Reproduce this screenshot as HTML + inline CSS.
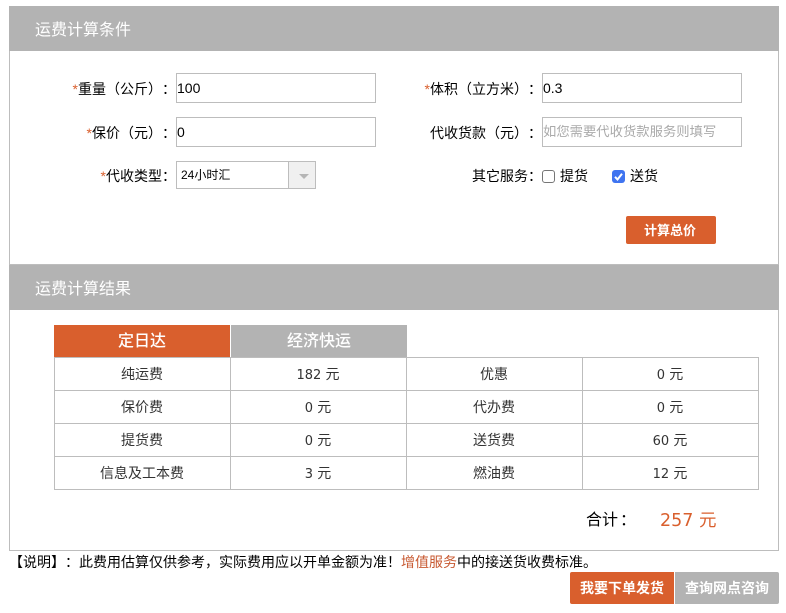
<!DOCTYPE html>
<html lang="zh">
<head>
<meta charset="utf-8">
<style>
html,body{margin:0;padding:0;background:#fff;}
body{width:786px;height:613px;position:relative;overflow:hidden;font-family:"Liberation Sans","Noto Sans CJK SC",sans-serif;font-size:14px;color:#000;text-spacing-trim:space-all;}
.a{position:absolute;white-space:nowrap;}
.hd{position:absolute;left:9px;width:770px;background:#b3b3b3;color:#fff;font-size:16px;}
.hd span{position:absolute;left:26px;}
.lb{position:absolute;text-align:right;white-space:nowrap;line-height:20px;height:20px;}
.lb i{font-style:normal;color:#d95f2d;}
.in{position:absolute;box-sizing:border-box;width:200px;height:30px;border:1px solid #bdbdbd;background:#fff;line-height:28px;padding-left:0;white-space:nowrap;overflow:hidden;}
.v{position:absolute;box-sizing:border-box;height:33px;line-height:32px;text-align:center;color:#333;width:176px;}
.v b{font-weight:normal;font-family:"DejaVu Sans",sans-serif;font-size:13px;}
.l{position:absolute;background:#bdbdbd;}
.btn{position:absolute;color:#fff;text-align:center;font-weight:bold;}
</style>
</head>
<body>
<div class="a" style="left:9px;top:6px;width:770px;height:545px;box-sizing:border-box;border:1px solid #bdbdbd;"></div>

<div class="hd" style="top:6px;height:45px;line-height:50px;"><span>运费计算条件</span></div>

<div class="lb" style="left:26px;width:150px;top:79px;"><i>*</i>重量（公斤）：</div>
<div class="in" style="left:176px;top:73px;">100</div>
<div class="lb" style="left:392px;width:150px;top:79px;"><i>*</i>体积（立方米）：</div>
<div class="in" style="left:542px;top:73px;">0.3</div>

<div class="lb" style="left:26px;width:150px;top:123px;"><i>*</i>保价（元）：</div>
<div class="in" style="left:176px;top:117px;">0</div>
<div class="lb" style="left:392px;width:150px;top:123px;">代收货款（元）：</div>
<div class="in" style="left:542px;top:117px;color:#aaa;font-size:13.330px;">如您需要代收货款服务则填写</div>

<div class="lb" style="left:26px;width:150px;top:166px;"><i>*</i>代收类型：</div>
<div class="a" style="left:176px;top:161px;width:140px;height:28px;box-sizing:border-box;border:1px solid #bdbdbd;font-size:12px;line-height:27px;padding-left:4px;">24小时汇
  <div style="position:absolute;left:111px;top:0;width:26px;height:26px;background:#f0f0f0;border-left:1px solid #bdbdbd;"></div>
  <svg style="position:absolute;left:122px;top:12px;" width="10" height="5"><path d="M0 0H10L5 5Z" fill="#b5b5b5"/></svg>
</div>

<div class="lb" style="left:392px;width:150px;top:166px;">其它服务：</div>
<div class="a" style="left:542px;top:170px;width:13px;height:13px;box-sizing:border-box;border:1px solid #767676;border-radius:3px;background:#fff;"></div>
<div class="a" style="left:560px;top:166px;line-height:20px;">提货</div>
<div class="a" style="left:612px;top:170px;width:13px;height:13px;border-radius:3px;background:#3f74f0;"></div>
<svg class="a" style="left:612px;top:170px;" width="13" height="13"><path d="M3 6.800L5.500 9.500L10 3.800" fill="none" stroke="#fff" stroke-width="2"/></svg>
<div class="a" style="left:630px;top:166px;line-height:20px;">送货</div>

<div class="btn" style="left:625px;top:216px;width:90px;height:28px;line-height:29px;font-size:13px;"></div>
<div class="a" style="left:626px;top:216px;width:90px;height:28px;background:#d95f2d;border-radius:2px;"></div>
<div class="btn" style="left:625px;top:216px;width:90px;height:28px;line-height:29px;font-size:13px;">计算总价</div>

<div class="a" style="left:9px;top:264px;width:770px;height:2px;background:#bdbdbd;"></div>
<div class="hd" style="top:265px;height:45px;line-height:48px;"><span style="top:1px;">运费计算结果</span></div>

<div class="a" style="left:54px;top:325px;width:176px;height:32px;line-height:33px;background:#d95f2d;color:#fff;text-align:center;font-size:16px;font-weight:500;">定日达</div>
<div class="a" style="left:231px;top:325px;width:176px;height:32px;line-height:33px;background:#b3b3b3;color:#fff;text-align:center;font-size:16px;font-weight:500;">经济快运</div>

<div class="l" style="left:54px;top:357px;width:705px;height:1px;"></div>
<div class="l" style="left:54px;top:390px;width:705px;height:1px;"></div>
<div class="l" style="left:54px;top:423px;width:705px;height:1px;"></div>
<div class="l" style="left:54px;top:456px;width:705px;height:1px;"></div>
<div class="l" style="left:54px;top:489px;width:705px;height:1px;"></div>
<div class="l" style="left:54px;top:357px;width:1px;height:133px;"></div>
<div class="l" style="left:230px;top:357px;width:1px;height:133px;"></div>
<div class="l" style="left:406px;top:357px;width:1px;height:133px;"></div>
<div class="l" style="left:582px;top:357px;width:1px;height:133px;"></div>
<div class="l" style="left:758px;top:357px;width:1px;height:133px;"></div>

<div class="v" style="left:54px;top:358px;">纯运费</div>
<div class="v" style="left:230px;top:358px;"><b>182 </b>元</div>
<div class="v" style="left:406px;top:358px;">优惠</div>
<div class="v" style="left:582px;top:358px;"><b>0 </b>元</div>
<div class="v" style="left:54px;top:391px;">保价费</div>
<div class="v" style="left:230px;top:391px;"><b>0 </b>元</div>
<div class="v" style="left:406px;top:391px;">代办费</div>
<div class="v" style="left:582px;top:391px;"><b>0 </b>元</div>
<div class="v" style="left:54px;top:424px;">提货费</div>
<div class="v" style="left:230px;top:424px;"><b>0 </b>元</div>
<div class="v" style="left:406px;top:424px;">送货费</div>
<div class="v" style="left:582px;top:424px;"><b>60 </b>元</div>
<div class="v" style="left:54px;top:457px;">信息及工本费</div>
<div class="v" style="left:230px;top:457px;"><b>3 </b>元</div>
<div class="v" style="left:406px;top:457px;">燃油费</div>
<div class="v" style="left:582px;top:457px;"><b>12 </b>元</div>

<div class="a" style="left:586px;top:510px;font-size:16px;line-height:22px;">合计<span style="position:relative;left:2px;">：</span></div>
<div class="a" style="left:660px;top:508px;font-size:17.500px;line-height:24px;color:#d95f2d;"><span style="font-family:'DejaVu Sans',sans-serif;">257 </span>元</div>

<div class="a" style="left:9px;top:552px;line-height:20px;">【说明】：此费用估算仅供参考，实际费用应以开单金额为准！<span style="color:#c85a32;">增值服务</span>中的接送货收费标准。</div>

<div class="btn" style="left:570px;top:572px;width:104px;height:32px;line-height:32px;background:#d95f2d;border-radius:2px 0 0 2px;">我要下单发货</div>
<div class="btn" style="left:675px;top:572px;width:104px;height:32px;line-height:32px;background:#b3b3b3;border-radius:0 2px 2px 0;">查询网点咨询</div>
</body>
</html>
